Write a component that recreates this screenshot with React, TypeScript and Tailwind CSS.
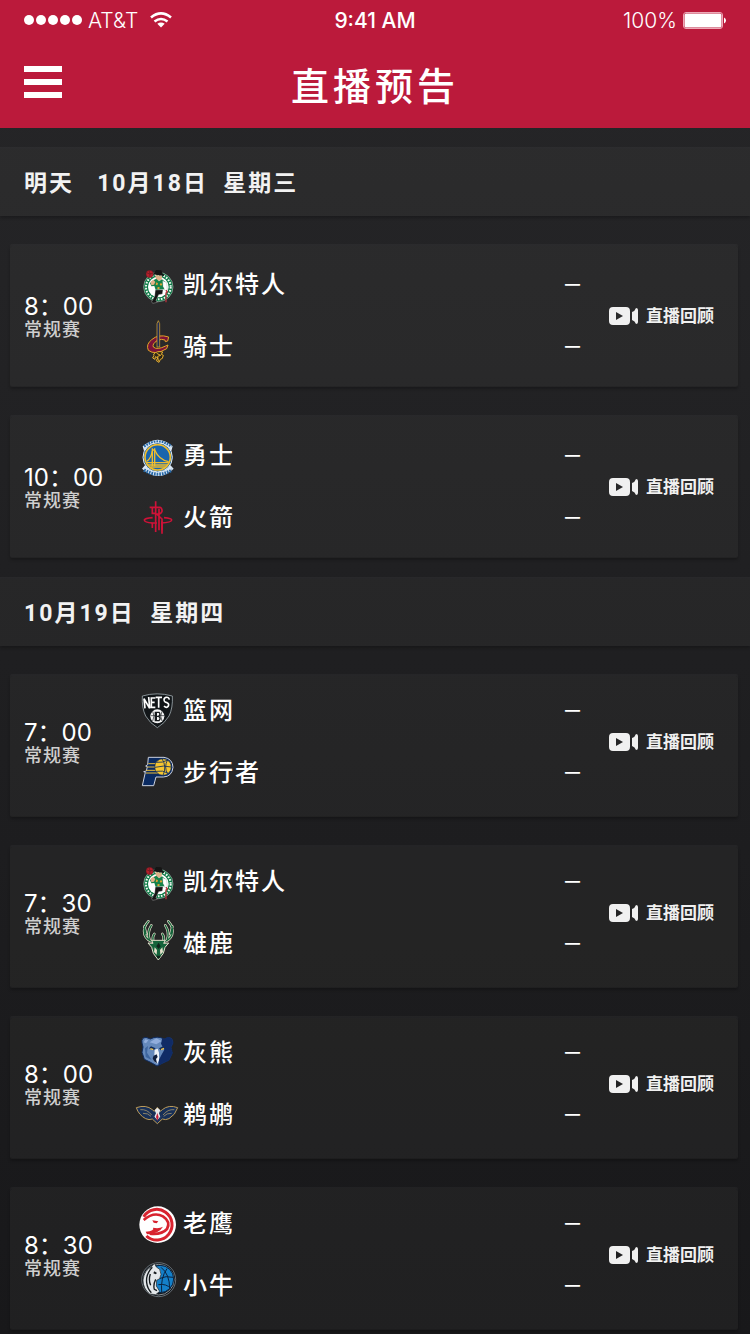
import type { ReactNode } from 'react';

const Celtics = () => (
  <>
    <circle cx="64" cy="66" r="44" fill="#0b7a45" stroke="#a9b5ad" strokeWidth="2" />
    <circle cx="64" cy="66" r="37" fill="none" stroke="#f2f7f3" strokeWidth="6" strokeDasharray="5 4" />
    <circle cx="64" cy="66" r="31" fill="#fff" />
    <path d="M52 23l5-8 16 1 4 10 5 3-2 4-32-5z" fill="#151515" />
    <path d="M55 30l20 3-1 10-8 5-9-6z" fill="#e0b088" />
    <path d="M50 45l8-4 8 8 9-6 10 8-4 8 1 14-26 2-4-12-9 1-4-10z" fill="#13824a" />
    <path d="M41 50l8-6 6 7-4 8-8 2z" fill="#e0b088" />
    <path d="M58 52l5 3-2 6-5-2zM72 54l4 4-4 5-4-5zM62 66l6 1-1 6-6-1z" fill="#e0a234" />
    <path d="M77 47l12 6 2 22-6 3-7-14z" fill="#fff" stroke="#8a9a90" strokeWidth="1" />
    <path d="M55 75l23-1-2 13-11 2-8 18 4 5-14 3-3-5 9-17z" fill="#151515" stroke="#d5d5d5" strokeWidth="1" />
    <path d="M87 76l4 4-4 4v28" fill="none" stroke="#b7323b" strokeWidth="4" />
    <circle cx="38" cy="27" r="11" fill="#b51f2c" stroke="#40191c" strokeWidth="1" />
    <path d="M29 23q9 7 18 2M36 16q5 10 2 22" fill="none" stroke="#40191c" strokeWidth="1.5" />
  </>
);

const Cavaliers = () => (
  <>
    <path
      d="M95 30Q64 20 44 38 26 52 34 70q20 16 55-5l4-11-7 3q-26 13-37 3-4-9 11-19 14-7 24-2l1 5 7-2z"
      fill="#7b1238"
      stroke="#e0a526"
      strokeWidth="3"
    />
    <path d="M60-10l4-9 4 9v70h-8z" fill="#1d2a57" stroke="#e8b030" strokeWidth="2" />
    <path
      d="M50 81q10-10 27-6l-4 7 6 3q-2 13-9 12l-4 9-8-5q2-6 5-8l-8-4-1 8-7-4 4-8z"
      fill="#2a2417"
      stroke="#e8b030"
      strokeWidth="3"
    />
    <path d="M59 79l12 6-9 3 2 14" fill="none" stroke="#e8b030" strokeWidth="3" />
  </>
);

const Warriors = () => (
  <>
    <path d="M17 31Q62-8 107 31l-4 14H21zM15 98l10-12h74l11 12q-46 44-95 0z" fill="#dce8f4" />
    <path d="M21 31Q62 3 104 31" fill="none" stroke="#2668a7" strokeWidth="8" strokeDasharray="5 3" />
    <path d="M21 102q43 25 84 0" fill="none" stroke="#2668a7" strokeWidth="10" strokeDasharray="5 3" />
    <circle cx="62" cy="64" r="44" fill="#1762a8" stroke="#e6eef7" strokeWidth="3" />
    <circle cx="62" cy="64" r="38" fill="#1965ad" stroke="#f0bd2e" strokeWidth="5" />
    <path d="M30 80h65M32 87h61M40 93h46" stroke="#f0bd2e" strokeWidth="4" />
    <path d="M46 91V37M53 91V37M46 42h7" stroke="#f0bd2e" strokeWidth="4" />
    <path d="M53 42q13 30 42 35M46 45q-4 22-16 31" fill="none" stroke="#f0bd2e" strokeWidth="4" />
  </>
);

const Rockets = () => (
  <g fill="none" stroke="#cf1238" strokeWidth="5">
    <path d="M38 28h31q7 3 6 12-3 10-16 8l16 15v34M46 28v18h12M56 10v92M66 32v65" />
    <path d="M47 59Q23 61 22 66q1 8 24 9M81 59q23 2 23 7-1 8-32 9" />
    <path d="M43 75h17M46 75v15M75 70v37" />
  </g>
);

const Nets = () => (
  <>
    <path
      d="M16 15q44-13 90 0 2 36-10 60-13 22-35 35-22-13-35-35Q14 51 16 15z"
      fill="#111518"
      stroke="#9ea8ad"
      strokeWidth="2.5"
    />
    <path
      d="M24 52l-3-29 17 29-3-34M55 21H43v28h12M43 34h10M56 19h19M65 19v31M97 26q-2-9-10-7-8 2-5 11 2 4 8 5 7 3 4 10-5 8-13 0"
      fill="none"
      stroke="#fff"
      strokeWidth="5"
    />
    <circle cx="61" cy="76" r="21" fill="#f5f5f5" />
    <path d="M42 74h13M68 74h13M47 61q8 14 0 29M75 61q-8 14 0 29" fill="none" stroke="#15191c" strokeWidth="2" />
    <path d="M55 64h11q6 6-1 12 8 5 1 13H55zM58 64v25M56 76h8" fill="none" stroke="#15191c" strokeWidth="4" />
  </>
);

const Pacers = () => (
  <>
    <path
      d="M34 13h47q26 4 27 30-3 28-29 29H57L50 98H16l9-40-5-2 8-2 3-13-5-2 6-4z"
      fill="#0a2a61"
      stroke="#ccd2df"
      strokeWidth="3"
    />
    <path d="M34 32h28M31 42h30M28 52h34M27 60h39" stroke="#e9bc39" strokeWidth="3" />
    <circle cx="78" cy="42" r="25" fill="#f5c52f" stroke="#0a2a61" strokeWidth="2" />
    <path
      d="M54 43q26-7 49-1M58 28q19 2 35-7M58 55q20-4 36 6M75 17q15 24 3 50M91 22q-10 19 0 40"
      fill="none"
      stroke="#0a2a61"
      strokeWidth="2.5"
    />
  </>
);

const antlers = 'M52 54Q30 50 23 32 17 10 34-8M37 46q-7-21 6-42M27 30L22 8M76 54q22-4 29-22 6-22-11-40M91 46q7-21-6-42M101 30l5-22M48 50q-2-13 4-20M80 50q2-13-4-20';

const Bucks = () => (
  <>
    <path d={antlers} fill="none" stroke="#e6e1cc" strokeWidth="8" strokeLinecap="round" />
    <path d={antlers} fill="none" stroke="#15643b" strokeWidth="4" strokeLinecap="round" />
    <path d="M44 49h41l-5 9 15-1-11 13-5 18-15 20-15-20-5-18-11-13 15 1z" fill="#15643b" stroke="#e6e1cc" strokeWidth="3" />
    <path d="M53 70l7 8-1 14-8-8zM76 70l-7 8 1 14 8-8z" fill="#e6e1cc" />
    <path d="M58 95h13l-3 8h-7zM58 67l7-11 6 11-6 8z" fill="#10231b" />
  </>
);

const Grizzlies = () => (
  <>
    <path
      d="M15 30Q12 14 27 13l13 5q20-11 42 0l11-5q15 1 15 17l-6 13 4 17-10 22-18 8-18 9-17-10-21-10-7-21 3-16z"
      fill="#6589bb"
      stroke="#102b5d"
      strokeWidth="3"
    />
    <path d="M76 15l6 3 11-5q15 1 15 17l-6 13 4 17-10 22-18 8-14 8 2-18 6-12 10-18-10-18z" fill="#102b66" />
    <path d="M20 28l5-9 9 3-7 9zM38 28l20-12 16 8-16 10z" fill="#91addb" />
    <path d="M24 46l9-7-3 20 14 22-18-9z" fill="#3e669f" />
    <path d="M36 46l6-6 14 6-6 6zM84 45l-6-5-12 6 5 6z" fill="#102b5d" />
    <path d="M40 47l9 3M72 50l9-4" stroke="#f3c448" strokeWidth="4" />
    <path d="M53 50l9-3 4 12v22l-5 11-11-8 2-16z" fill="#eef2f8" />
    <path d="M50 68l9-4 3 8-5 6 3 13-9-6-4-9z" fill="#101f3e" />
  </>
);

const Pelicans = () => (
  <>
    <path
      d="M-2 38Q27 28 46 44l6 5 9-12 9 12 6-5q19-16 46-6-7 22-26 33-10 5-20 1L61 86 46 72q-10 4-20-1Q5 60-2 38z"
      fill="#172f57"
      stroke="#bd9b59"
      strokeWidth="3"
    />
    <path
      d="M10 44q20-2 34 16M18 55q15-1 24 9M112 44q-20-2-34 16M104 55q-15-1-24 9"
      fill="none"
      stroke="#c6aa70"
      strokeWidth="2"
    />
    <path d="M53 46l8-8 9 8-4 9 4 10-9 10-9-10 5-10z" fill="#e6e8eb" />
    <path d="M61 54l4 12-4 12-4-12z" fill="#c51f3a" />
    <path d="M47 60l9 16M75 60l-9 16" stroke="#223963" strokeWidth="4" />
  </>
);

const Hawks = () => (
  <>
    <circle cx="62" cy="62" r="55" fill="#fff" />
    <path d="M20 38A46 46 0 1 1 28 96" fill="none" stroke="#d8232f" strokeWidth="9" />
    <path d="M20 48Q50 22 78 37q24 16 12 38-16 18-52 14" fill="none" stroke="#d8232f" strokeWidth="8" />
    <path d="M46 49l18 3-5 6-9-2zM30 91q36-2 48-23-12 7-30 3 6 9-22 12z" fill="#d8232f" />
  </>
);

const Mavericks = () => (
  <>
    <circle cx="65" cy="41" r="51" fill="#12171c" stroke="#8e979f" strokeWidth="2" />
    <circle cx="65" cy="41" r="46" fill="none" stroke="#c9d0d6" strokeWidth="2" />
    <circle cx="69" cy="39" r="41" fill="#1480c9" stroke="#0b2340" strokeWidth="3" />
    <path
      d="M72 4Q98 24 98 68M90 8Q70 36 74 78M66 38q22-10 42-4M64 56q24-4 38 12"
      fill="none"
      stroke="#0b2340"
      strokeWidth="3"
    />
    <path
      d="M52-8l6 11 10 7q8 16 0 28l-9 5-1 17 10 16-12 10-18-2Q18 68 18 42q4-30 26-40z"
      fill="#e3e7ea"
      stroke="#14191d"
      strokeWidth="2"
    />
    <path d="M46 4Q26 24 29 50q2 18 14 30M40 24q-6 18 1 34M56 40q-8 16-4 30l8 4" fill="none" stroke="#14191d" strokeWidth="4" />
    <path d="M52 16l8 5-4 4-7-3z" fill="#14191d" />
  </>
);

type Team = { name: string; logo: ReactNode };
type Game = { time: string; home: Team; away: Team };
type Day = { date: string; cardPadding: string; games: Game[] };

const celtics = { name: '凯尔特人', logo: <Celtics /> };

const days: Day[] = [
  {
    date: '明天   10月18日  星期三',
    cardPadding: 'pt-2 pb-2',
    games: [
      { time: '8：00', home: celtics, away: { name: '骑士', logo: <Cavaliers /> } },
      { time: '10：00', home: { name: '勇士', logo: <Warriors /> }, away: { name: '火箭', logo: <Rockets /> } },
    ],
  },
  {
    date: '10月19日  星期四',
    cardPadding: 'pt-1 pb-3',
    games: [
      { time: '7：00', home: { name: '篮网', logo: <Nets /> }, away: { name: '步行者', logo: <Pacers /> } },
      { time: '7：30', home: celtics, away: { name: '雄鹿', logo: <Bucks /> } },
      { time: '8：00', home: { name: '灰熊', logo: <Grizzlies /> }, away: { name: '鹈鹕', logo: <Pelicans /> } },
      { time: '8：30', home: { name: '老鹰', logo: <Hawks /> }, away: { name: '小牛', logo: <Mavericks /> } },
    ],
  },
];

function TeamRow({ team }: { team: Team }) {
  return (
    <div className="flex h-[62px] items-center">
      <svg viewBox="0 0 120 120" className="w-10 h-10 shrink-0 overflow-visible" aria-hidden="true">
        {team.logo}
      </svg>
      <span className="ml-1.5 flex-1 text-[24px] leading-none font-medium tracking-[2px]">{team.name}</span>
      <span className="pb-1 text-[30px] leading-none font-light">–</span>
    </div>
  );
}

function GameCard({ game, padding }: { game: Game; padding: string }) {
  return (
    <article
      className={`ml-2.5 mr-3 flex items-center rounded-xs border-b border-black/10 bg-[#fffdea]/[0.035] pl-3.5 pr-6 shadow-[0_-2px_1px_rgba(255,255,255,0.04),0_2px_3px_rgba(0,0,0,0.25)] ${padding}`}
    >
      <div className="w-[113px] shrink-0 pt-1">
        <p className="text-[24px] leading-6">{game.time}</p>
        <p className="text-[18px] leading-[22px] font-medium tracking-[1px] text-[#cfcfcf]">常规赛</p>
      </div>
      <div className="flex-1">
        <TeamRow team={game.home} />
        <TeamRow team={game.away} />
      </div>
      <button className="ml-7 flex items-center gap-2 text-[17px] leading-6 font-bold text-[#f0f0f0]">
        <svg viewBox="0 0 30 18" className="w-[30px] h-[18px]" fill="currentColor" aria-hidden="true">
          <path fillRule="evenodd" d="M5 0h13q4 0 4 4v10q0 4-4 4H5q-4 0-4-4V4q0-4 4-4zM8 5v8l7-4z" />
          <path d="M24 5q3-1 4-4 2 0 2 2v12q0 2-2 2-1-3-4-4z" />
        </svg>
        直播回顾
      </button>
    </article>
  );
}

export default function SchedulePage() {
  return (
    <div className="min-h-screen bg-linear-to-b from-[#262628] to-[#18181a] pb-[5px] font-[Inter,'Noto_Sans_CJK_SC',sans-serif] text-white">
      <header className="bg-[#bb1a3b]">
        {/* Status bar */}
        <div className="grid h-10 grid-cols-3 items-center px-6 text-[21px] leading-none">
          <div className="flex items-center">
            <div className="flex gap-0.5">
              {[0, 1, 2, 3, 4].map((i) => (
                <span key={i} className="w-2.5 h-2.5 rounded-full bg-white" />
              ))}
            </div>
            <span className="ml-1.5 font-light">AT&amp;T</span>
            <svg viewBox="0 0 22 16" className="ml-3 w-[22px] h-4" fill="none" stroke="white" strokeWidth="2.6" aria-hidden="true">
              <path d="M1 5.5Q11-2.7 21 5.5M4.5 9.5q6.5-5 13 0" />
              <path d="M11 15.5L7.3 11.8q3.7-2.7 7.4 0z" fill="white" stroke="none" />
            </svg>
          </div>
          <span className="text-center font-medium">9:41 AM</span>
          <div className="flex items-center justify-end gap-1.5">
            <span className="font-light">100%</span>
            <svg viewBox="0 0 43 17" className="w-[43px] h-[17px]" aria-hidden="true">
              <rect x=".5" y=".5" width="39" height="16" rx="2.5" fill="none" stroke="#eda9b7" />
              <rect x="1.5" y="1.5" width="37" height="14" rx="1.5" fill="white" />
              <path d="M41 5.5q2 1 2 3t-2 3z" fill="white" />
            </svg>
          </div>
        </div>
        <div className="grid h-[88px] grid-cols-[1fr_auto_1fr] items-center px-6">
          <button aria-label="菜单" className="mb-1 flex w-[38px] flex-col gap-[7px]">
            <span className="h-1.5 bg-white" />
            <span className="h-1.5 bg-white" />
            <span className="h-1.5 bg-white" />
          </button>
          <h1 className="pt-1 text-[38px] leading-none font-medium tracking-[4px]">直播预告</h1>
        </div>
      </header>

      <main>
        {days.map((day) => (
          <section key={day.date} className="flex flex-col gap-[30px] pt-[21px]">
            <h2 className="flex h-[67px] items-center whitespace-pre bg-[#fffdea]/[0.035] px-6 pt-1 font-[Roboto,'Noto_Sans_CJK_SC',sans-serif] text-[23px] font-bold tracking-[2px] text-[#f2f2f2] shadow-[0_-2px_1px_rgba(255,255,255,0.04),0_2px_3px_rgba(0,0,0,0.25)]">
              {day.date}
            </h2>
            {day.games.map((game, i) => (
              <GameCard key={i} game={game} padding={day.cardPadding} />
            ))}
          </section>
        ))}
      </main>
    </div>
  );
}
